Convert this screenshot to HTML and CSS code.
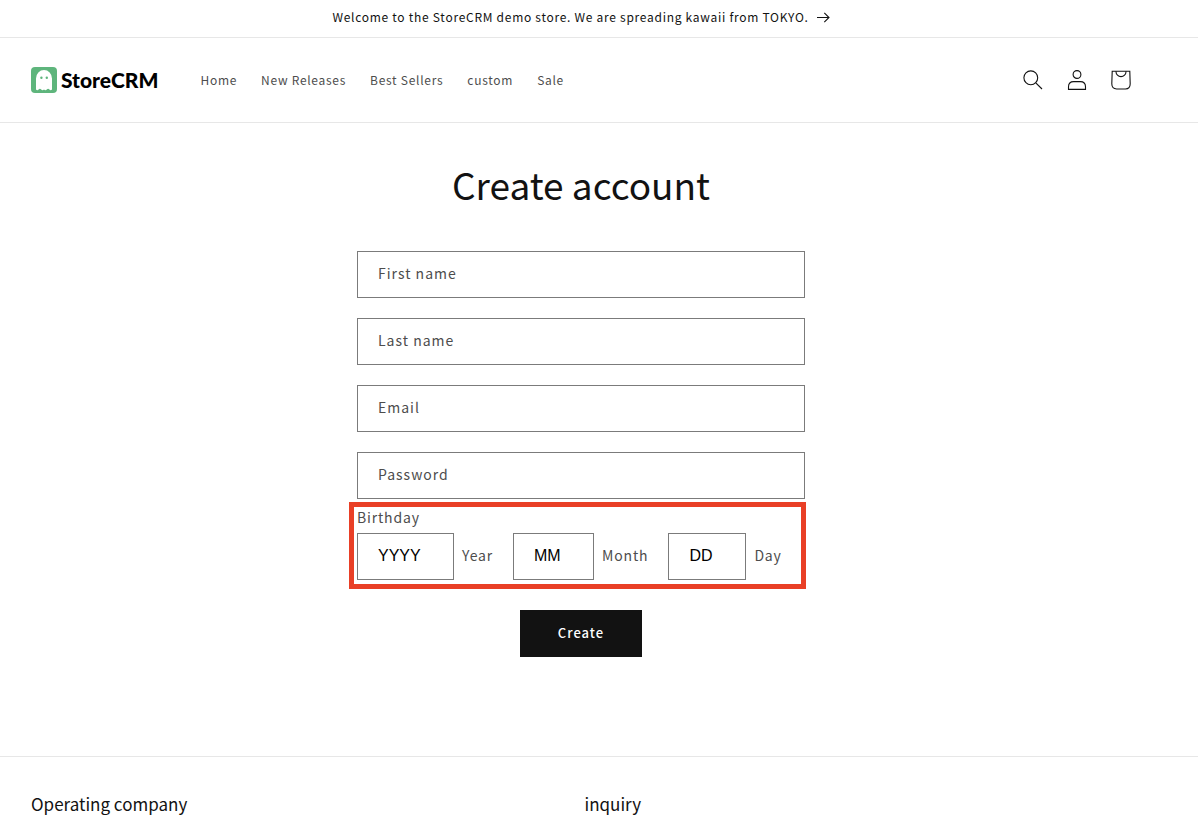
FILE: index.html
```html
<!doctype html>
<html lang="en">
<head>
  <meta charset="utf-8">
  <meta name="viewport" content="width=device-width, initial-scale=1">
  <title>Create account - StoreCRM</title>
  <link rel="stylesheet" href="styles.css">
</head>
<body>

  <div class="announcement">
    <a href="#">
      Welcome to the StoreCRM demo store. We are spreading kawaii from TOKYO.
      <svg width="13" height="11" viewBox="0 0 13 11" fill="none" stroke="currentColor" stroke-width="1.1" aria-hidden="true">
        <path d="M0 5.5h12M7.3 .8l4.7 4.7-4.7 4.7"/>
      </svg>
    </a>
  </div>

  <header class="header">
    <a href="#" class="logo">
      <svg width="26" height="26" viewBox="0 0 26 26" aria-hidden="true">
        <rect width="26" height="26" rx="4" fill="#5eb57c"/>
        <path d="M5 22.5V11.5a8 8.5 0 0 1 16 0v11q-1.4 1.6-2.6 0q-1.3-1.4-2.6 0q-1.4 1.6-2.8 0q-1.4 1.6-2.8 0q-1.3-1.4-2.6 0q-1.2 1.6-2.6 0z" fill="#fff"/>
        <circle cx="10.4" cy="10.8" r="1.2" fill="#5eb57c"/>
        <circle cx="15.8" cy="10.8" r="1.2" fill="#5eb57c"/>
      </svg>
      <span>StoreCRM</span>
    </a>

    <nav class="menu">
      <a href="#">Home</a>
      <a href="#">New Releases</a>
      <a href="#">Best Sellers</a>
      <a href="#">custom</a>
      <a href="#">Sale</a>
    </nav>

    <div class="icons">
      <a href="#" aria-label="Search">
        <svg width="20" height="20" viewBox="0 0 20 20" fill="none" stroke="currentColor" stroke-width="1.1">
          <circle cx="7.8" cy="7.8" r="6.9"/>
          <path d="M12.8 12.8l6.2 6.2"/>
        </svg>
      </a>
      <a href="#" aria-label="Log in">
        <svg width="20" height="20" viewBox="0 0 20 20" fill="none" stroke="currentColor" stroke-width="1.1">
          <circle cx="10" cy="4.5" r="3.9"/>
          <path d="M1.5 19.4v-2.6c0-3.4 2.3-5.2 5.2-5.2h6.6c2.9 0 5.2 1.8 5.2 5.2v2.6z"/>
        </svg>
      </a>
      <a href="#" aria-label="Cart">
        <svg width="20" height="20" viewBox="0 0 20 20" fill="none" stroke="currentColor" stroke-width="1.1">
          <path d="M1.2 1.2h17.6l.4 12.6c0 3.4-1.8 5.2-4.8 5.2H5.6c-3 0-4.8-1.8-4.8-5.2z"/>
          <path d="M5 1.2v.6a5 4.8 0 0 0 10 0v-.6"/>
        </svg>
      </a>
    </div>
  </header>

  <main class="register">
    <h1>Create account</h1>
    <form>
      <input class="field" type="text" placeholder="First name" aria-label="First name">
      <input class="field" type="text" placeholder="Last name" aria-label="Last name">
      <input class="field" type="email" placeholder="Email" aria-label="Email">
      <input class="field" type="password" placeholder="Password" aria-label="Password">

      <div class="birthday" role="group" aria-labelledby="birthday-label">
        <div id="birthday-label" class="birthday-label">Birthday</div>
        <div class="birthday-row">
          <div class="part">
            <select id="year"><option>YYYY</option></select>
            <label for="year">Year</label>
          </div>
          <div class="part">
            <select id="month"><option>MM</option></select>
            <label for="month">Month</label>
          </div>
          <div class="part">
            <select id="day"><option>DD</option></select>
            <label for="day">Day</label>
          </div>
        </div>
      </div>

      <button type="button" class="create">Create</button>
    </form>
  </main>

  <footer class="footer">
    <h2>Operating company</h2>
    <h2>inquiry</h2>
  </footer>

</body>
</html>
```
FILE: styles.css
```css
* {
  box-sizing: border-box;
}

body {
  margin: 0;
  background: #fff;
  color: #121212;
  font-family: "Noto Sans CJK JP", "Noto Sans", sans-serif;
  font-size: 14px;
  line-height: 24px;
}

a {
  color: inherit;
  text-decoration: none;
}

svg {
  display: block;
}

/* top bar */
.announcement {
  padding: 5px 36px 8px 0;
  border-bottom: 1px solid #e7e7e7;
  font-size: 12px;
  letter-spacing: 0.06em;
}

.announcement a {
  display: flex;
  justify-content: center;
  align-items: center;
  gap: 8px;
}

/* header */
.header {
  display: flex;
  align-items: center;
  height: 85px;
  padding: 0 67px 0 31px;
  border-bottom: 1px solid #e7e7e7;
}

.logo {
  display: flex;
  align-items: center;
  gap: 4px;
  margin-right: 42px;
  color: #000;
  font-family: Lato, sans-serif;
  font-size: 21px;
  font-weight: 900;
}

.menu {
  display: flex;
  gap: 24px;
  color: #4d4d4d;
  font-size: 12px;
  letter-spacing: 0.06em;
}

.icons {
  display: flex;
  gap: 24px;
  margin-left: auto;
}

/* form */
.register {
  padding: 36px 36px 99px 0;
}

.register h1 {
  margin: 0 0 42px;
  font-size: 37px;
  font-weight: 400;
  line-height: 50px;
  text-align: center;
}

form {
  display: flex;
  flex-direction: column;
  width: 100%;
  max-width: 448px;
  margin: 0 auto;
}

.field,
select {
  height: 47px;
  padding: 0 20px 3px;
  border: 1px solid #7b7b7b;
  border-radius: 0;
  background: #fff;
  color: #121212;
}

.field {
  width: 100%;
  font: inherit;
  letter-spacing: 1px;
}

.field + .field {
  margin-top: 20px;
}

.field::placeholder {
  color: #4d4d4d;
  opacity: 1;
}

.birthday {
  position: relative;
  padding-top: 6px;
  color: #4d4d4d;
  letter-spacing: 0.06em;
}

/* red frame round the birthday block */
.birthday::after {
  content: "";
  position: absolute;
  top: 3px;
  right: -1px;
  bottom: -9px;
  left: -8px;
  border: 5px solid #e93f26;
  pointer-events: none;
}

.birthday-label {
  margin-bottom: 4px;
}

.birthday-row {
  display: flex;
  gap: 20px;
}

.part {
  display: flex;
  align-items: center;
  gap: 8px;
}

.part label {
  padding-bottom: 3px;
}

select {
  appearance: none;
  padding-right: 32px;
  color: #000;
  font-family: "Liberation Sans", Arial, sans-serif;
  font-size: 16px;
}

.create {
  align-self: center;
  width: 122px;
  height: 47px;
  margin-top: 30px;
  padding-bottom: 3px;
  border: 0;
  background: #121212;
  color: #fff;
  font: inherit;
  font-size: 13px;
  font-weight: 500;
  letter-spacing: 1px;
  cursor: pointer;
}

/* footer */
.footer {
  display: grid;
  grid-template-columns: 1fr 1fr;
  padding: 35px 60px 4px 31px;
  border-top: 1px solid #e7e7e7;
}

.footer h2 {
  margin: 0;
  font-size: 17px;
  font-weight: 400;
}
```
